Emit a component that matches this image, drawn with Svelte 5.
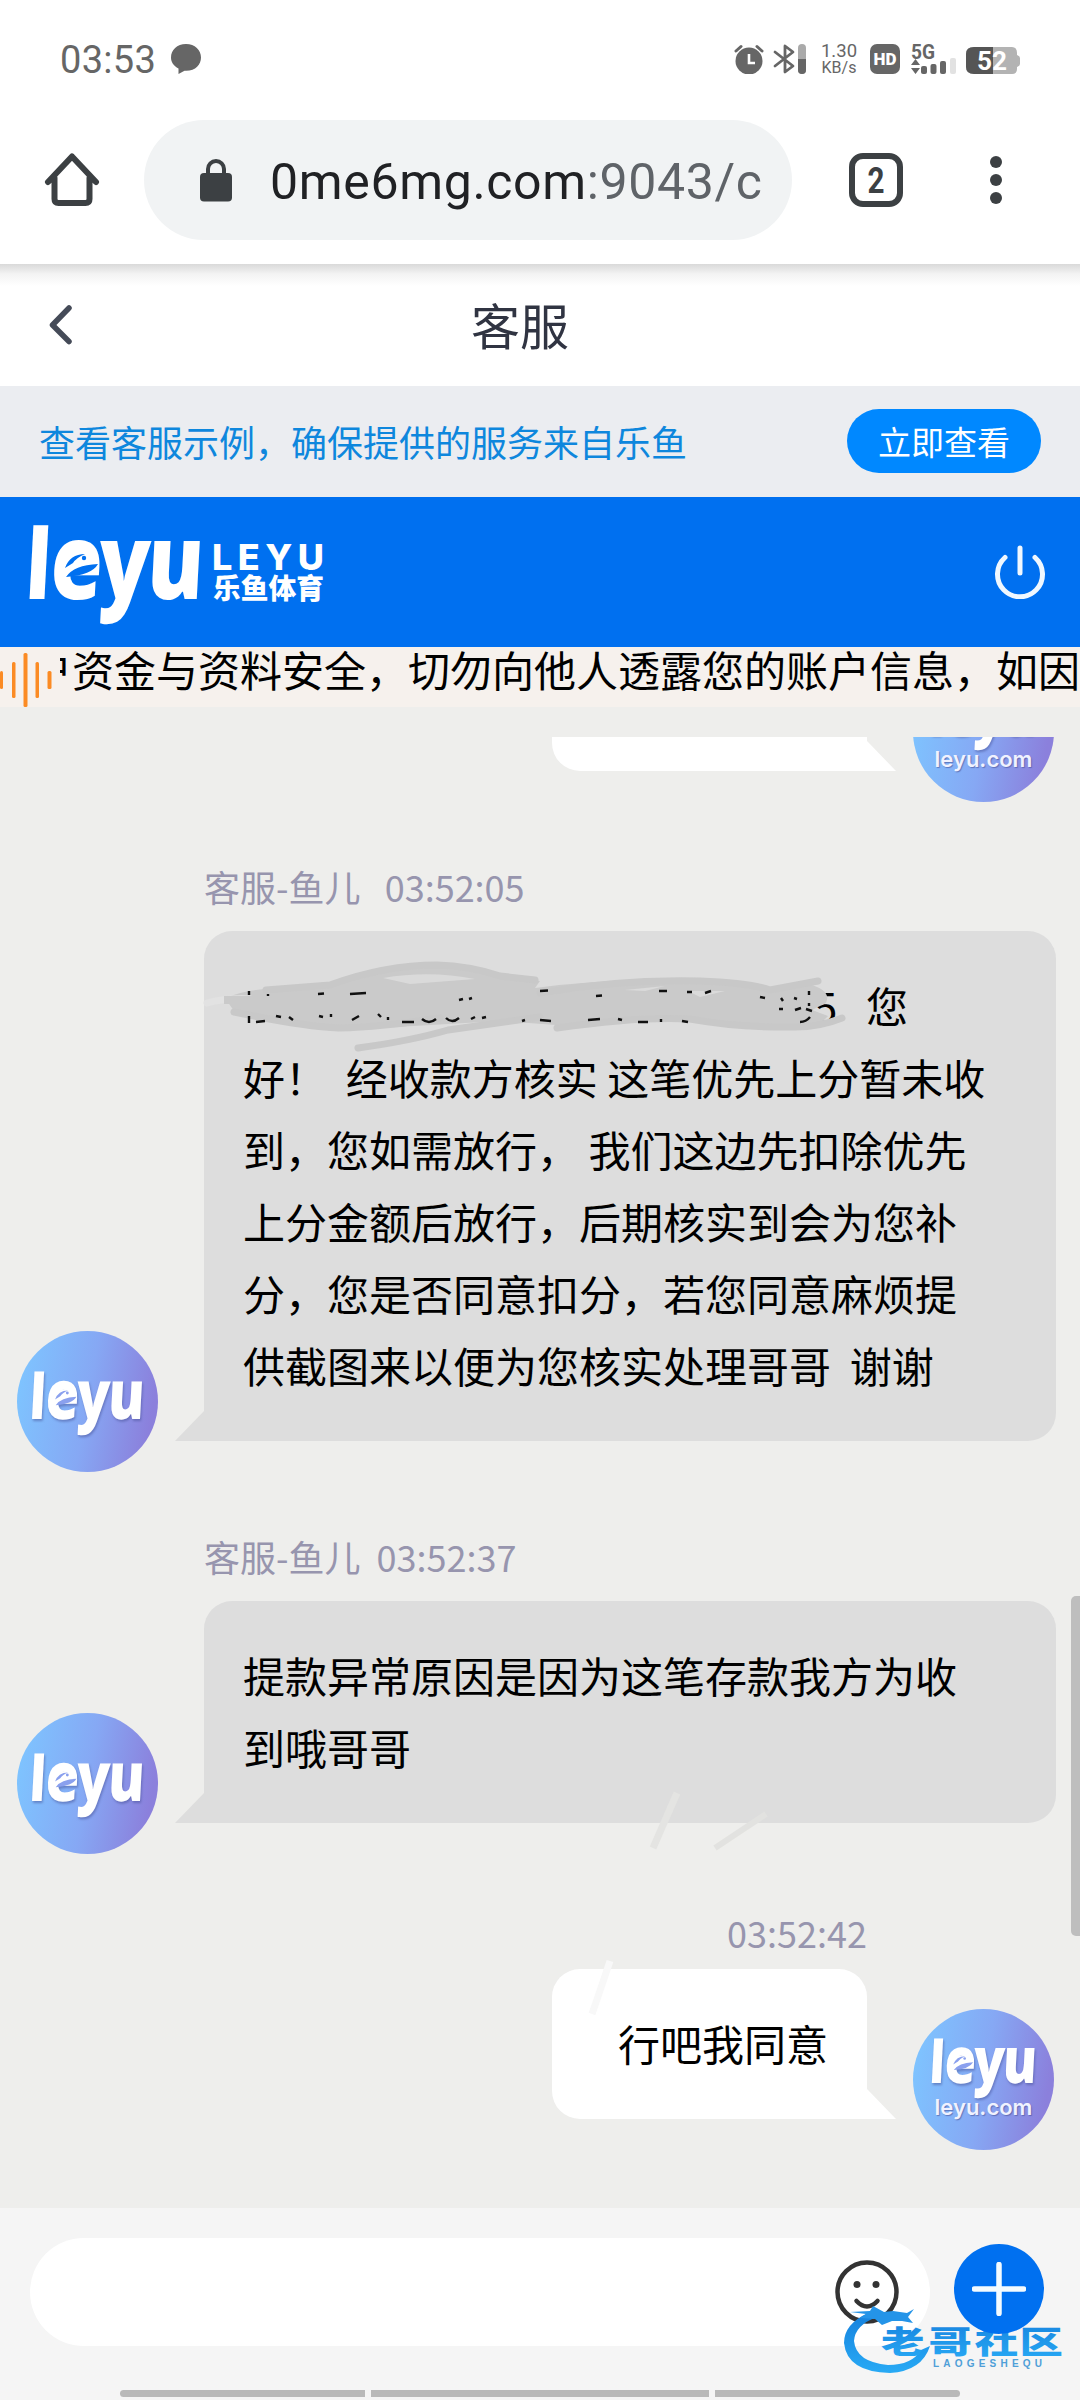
<script lang="ts">
  /**
   * Customer service chat page, shown inside a mobile browser.
   * Status bar, browser toolbar, brand header, notice ticker, messages, composer.
   */

  interface Message {
    id: number;
    side: 'agent' | 'user';
    name?: string;
    time: string;
    lines: string[];
    redacted?: boolean;
  }

  const messages: Message[] = [
    {
      id: 1,
      side: 'agent',
      name: '客服-鱼儿   ',
      time: '03:52:05',
      redacted: true,
      lines: [
        '您',
        '好！  经收款方核实 这笔优先上分暂未收',
        '到，您如需放行， 我们这边先扣除优先',
        '上分金额后放行，后期核实到会为您补',
        '分，您是否同意扣分，若您同意麻烦提',
        '供截图来以便为您核实处理哥哥  谢谢',
      ],
    },
    {
      id: 2,
      side: 'agent',
      name: '客服-鱼儿  ',
      time: '03:52:37',
      lines: ['提款异常原因是因为这笔存款我方为收', '到哦哥哥'],
    },
    { id: 3, side: 'user', time: '03:52:42', lines: ['行吧我同意'] },
  ];

  const waveBars = [
    { x: 0, y: 18, w: 3, h: 18 },
    { x: 12, y: 9, w: 3.5, h: 36 },
    { x: 23.5, y: 0, w: 4, h: 54 },
    { x: 35.5, y: 9, w: 3.5, h: 36 },
    { x: 47.5, y: 18, w: 4, h: 18 },
  ];
</script>

{#snippet wordmark(cut: string)}
  <svg class="wordmark" viewBox="0 0 172 96">
    <g transform="translate(0 75) skewX(-3) scale(0.8 1)">
      <text class="mark" y="0"><tspan x="-7" font-size="97">l</tspan><tspan x="24 84 145" font-size="105">eyu</tspan></text>
    </g>
    <!-- fish eye and fin inside the "e" -->
    <path d="M32 42 Q40 27 54 28 Q64 30 64 39 Q60 44 50 45 L36 50 Z" fill="#fff" />
    <path d="M35 44 Q40 30 55 30 Q46 34 43 39 Z M36 53 Q44 41 68 40 Q62 51 36 53 Z" fill={cut} />
    <circle cx="54" cy="34" r="2.2" fill={cut} />
  </svg>
{/snippet}

{#snippet avatar(withDomain: boolean)}
  <div class="avatar" class:with-domain={withDomain}>
    {@render wordmark('#8aa0ee')}
    {#if withDomain}<span class="domain">leyu.com</span>{/if}
  </div>
{/snippet}

<div class="screen">
  <div class="status">
    <span class="clock">03:53</span>
    <svg class="bubble-icon" width="32" height="30" viewBox="0 0 32 30">
      <path d="M16 0C7 0 1 6 1 13.5c0 4.500 2.500 8.500 7.500 11V30l6-3.300C25 27.500 31 21 31 13.500 31 6 25 0 16 0z" fill="#666" />
    </svg>
    <div class="status-right">
      <svg width="30" height="30" viewBox="0 0 30 30">
        <circle cx="15" cy="17" r="13.500" fill="#666" />
        <path d="M2 7 7 2.500M28 7 23 2.500" stroke="#666" stroke-width="3" stroke-linecap="round" />
        <path d="M15 10v9h6" fill="none" stroke="#fff" stroke-width="2.600" />
      </svg>
      <svg class="bt" width="34" height="30" viewBox="0 0 34 30">
        <path d="M2 8 20 22 12 28V2L20 8 2 22" fill="none" stroke="#666" stroke-width="2.800" stroke-linejoin="round" stroke-linecap="round" />
        <rect x="25" y="0" width="8" height="30" rx="4" fill="#aaa" />
        <path d="M25 15h8v11a4 4 0 0 1-8 0z" fill="#666" />
      </svg>
      <div class="speed"><span>1.30</span><span class="unit">KB/s</span></div>
      <div class="hd">HD</div>
      <svg class="signal" width="46" height="30" viewBox="0 0 46 30">
        <text x="0" y="14.500" class="fiveg" textLength="24" lengthAdjust="spacingAndGlyphs">5G</text>
        <path d="M0 21 4.500 15 9 21zM0 24 4.500 30 9 24z" fill="#666" />
        <rect x="10" y="22" width="6" height="8" rx="2" fill="#666" />
        <rect x="19.500" y="20" width="6" height="10" rx="2" fill="#666" />
        <rect x="29" y="17" width="6" height="13" rx="2" fill="#666" />
        <rect x="39" y="14" width="6" height="16" rx="2" fill="#e2e2e2" />
      </svg>
      <svg class="battery" width="55" height="28" viewBox="0 0 55 28">
        <path d="M8 0h38q5 0 5 6v2q3 1 3 3v6q0 2-3 3v2q0 5-5 5H8q-8 0-8-7V7q0-7 8-7z" fill="#b3b3b3" />
        <path d="M27 0H8Q0 0 0 7v13q0 7 8 7h19z" fill="#555" />
        <text x="11" y="23" textLength="30" lengthAdjust="spacingAndGlyphs" class="level">52</text>
      </svg>
    </div>
  </div>

  <div class="toolbar">
    <svg class="home" width="56" height="56" viewBox="0 0 56 56">
      <path d="M4 30 28 4.500 52 30M10.500 26V47q0 4 4 4h27q4 0 4-4V26" fill="none" stroke="#3c4043" stroke-width="6" stroke-linecap="round" stroke-linejoin="round" />
    </svg>
    <div class="url-bar">
      <svg width="32" height="43" viewBox="0 0 32 43">
        <rect y="14" width="32" height="28.500" rx="4" fill="#3c4043" />
        <path d="M8 18V10a8 8 0 0 1 16 0v8" fill="none" stroke="#3c4043" stroke-width="4" />
      </svg>
      <span class="url">0me6mg.com<span class="rest">:9043/c</span></span>
    </div>
    <svg class="tabs" width="54" height="54" viewBox="0 0 54 54">
      <rect x="3" y="3" width="48" height="48" rx="11" fill="none" stroke="#3c4043" stroke-width="6" />
      <text x="18.500" y="40" textLength="17" lengthAdjust="spacingAndGlyphs">2</text>
    </svg>
    <div class="dots"><i></i><i></i><i></i></div>
  </div>

  <div class="title-bar">
    <svg class="back" width="26" height="44" viewBox="0 0 26 44">
      <path d="M21 5 4.500 22 21 38.500" fill="none" stroke="#454b58" stroke-width="5.500" stroke-linecap="round" stroke-linejoin="round" />
    </svg>
    <h1>客服</h1>
  </div>

  <div class="banner">
    <span>查看客服示例，确保提供的服务来自乐鱼</span>
    <button>立即查看</button>
  </div>

  <header class="brand">
    <div class="logo">{@render wordmark('#0070f0')}</div>
    <svg class="brand-name" width="112" height="62" viewBox="0 0 112 62">
      <text x="-1" y="29" class="latin" textLength="112" lengthAdjust="spacing">LEYU</text>
      <text x="0" y="58" class="hans" textLength="111" lengthAdjust="spacingAndGlyphs">乐鱼体育</text>
    </svg>
    <svg class="power" width="52" height="54" viewBox="0 0 52 54">
      <path d="M26 3v25M11 12.500A22.500 22.500 0 1 0 41 12.500" fill="none" stroke="#f0f8ff" stroke-width="5" stroke-linecap="round" />
    </svg>
  </header>

  <div class="ticker">
    <svg class="wave" width="52" height="54" viewBox="0 0 52 54">
      {#each waveBars as bar (bar.x)}
        <rect x={bar.x} y={bar.y} width={bar.w} height={bar.h} rx="1.500" fill="#fb8b24" />
      {/each}
    </svg>
    <div class="ticker-window">
      <span>户资金与资料安全，切勿向他人透露您的账户信息，如因</span>
    </div>
  </div>

  <main class="messages">
    <div class="row user previous">
      <div class="bubble"></div>
      {@render avatar(true)}
    </div>

    {#each messages as msg (msg.id)}
      <div class="message {msg.side}">
        <div class="meta">{msg.name ?? ''}{msg.time}</div>
        <div class="row {msg.side}">
          {#if msg.side === 'agent'}{@render avatar(false)}{/if}
          <div class="bubble">
            {#each msg.lines as line, i (i)}
              <p class:after-redaction={msg.redacted && i === 0}>{line}</p>
            {/each}
            {#if msg.redacted}
              <svg class="scribble" width="680" height="120" viewBox="200 940 680 120">
                <text x="814" y="1023" font-size="42" fill="#000">5</text>
                <path d="M225 998 Q245 990 266 989 L330 986 Q378 967 436 965 Q470 966 495 975 L540 981 L535 988 Q600 979 671 980 Q725 979 768 988 L808 984 Q832 990 826 1003 L812 1010 L828 1016 Q815 1031 790 1028 L729 1024 L690 1017 L612 1021 L556 1025 L500 1021 L379 1028 Q335 1032 296 1023 L234 1011 Z" fill="#cacaca" />
                <g fill="none" stroke="#c8c8c8" stroke-width="7" stroke-linecap="round" stroke-linejoin="round">
                  <path d="M266 990 L330 985 Q385 965 437 965 Q470 966 500 976 L535 980" />
                  <path d="M234 1012 Q300 1026 339 1028 Q380 1027 440 1018" />
                  <path d="M358 1048 Q410 1041 448 1030 L540 1017" />
                  <path d="M557 1028 Q640 1016 690 1019 Q740 1028 795 1027 Q820 1027 842 1018" />
                  <path d="M540 993 Q620 979 700 981 Q750 983 770 990 L818 981" />
                </g>
                <path d="M207 1003 Q225 998 250 999" stroke="#e2e2e2" stroke-width="7" fill="none" stroke-linecap="round" />
                <path d="M224 1000 L262 1000" stroke="#cacaca" stroke-width="8" />
                <path d="M383 978 Q430 970 475 979 L410 984 Z M625 990 L665 986 L645 991 Z M688 991 L725 991 L700 997 Z" fill="#dadada" />
                <!-- bits of the covered text that still show -->
                <g fill="none" stroke="#111" stroke-width="2.400">
                  <path d="M249 991V995M268 994V996M318 994L324 993.500M350 994L366 993M459 1000L463 999M469 999L472 998" />
                  <path d="M249 1016V1023M256 1022L265 1021M276 1016L281 1017M289 1017L293 1020M319 1016L323 1017M331 1014V1017M352 1020L359 1016M378 1014L381 1017M388 1017V1020M402 1022H414M422 1019Q429 1025 436 1019M446 1018Q452 1024 459 1018M471 1019L475 1017M482 1018L486 1017M522 1021L525 1020M540 1020L551 1021" />
                  <path d="M540 991L548 990.500M596 996L602 995.500M659 991L667 991M687 992L692 992M705 993L711 991M588 1020L600 1019M618 1019L622 1020M638 1022L648 1022M661 1019V1022M682 1021L688 1022M760 997L765 998M781 998L783 1001M794 998L797 999M779 1009L783 1009M795 1010L801 1008M806 1009L812 1011M800 1022Q806 1022 810 1017M809 991V995M809 1003V1006" />
                </g>
              </svg>
            {/if}
          </div>
          {#if msg.side === 'user'}{@render avatar(true)}{/if}
        </div>
      </div>
    {/each}

    <svg class="marks" width="200" height="240" viewBox="580 1780 200 240">
      <path d="M653 1848 L677 1793" stroke="#e4e4e2" stroke-width="7" />
      <path d="M715 1848 L766 1814" stroke="#e2e2e0" stroke-width="6" />
      <path d="M592 2014 Q602 1985 610 1961" stroke="#f8f8f8" stroke-width="7" fill="none" />
    </svg>
    <div class="scrollbar"></div>
  </main>

  <footer>
    <div class="composer">
      <div class="input">
        <svg width="64" height="64" viewBox="0 0 64 64">
          <circle cx="32" cy="32" r="29.500" fill="none" stroke="#333" stroke-width="4.500" />
          <circle cx="22" cy="24.500" r="3.500" fill="#333" />
          <circle cx="41" cy="24.500" r="3.500" fill="#333" />
          <path d="M21.500 41Q32 52 42.500 41" fill="none" stroke="#333" stroke-width="4.500" stroke-linecap="round" />
        </svg>
      </div>
      <div class="plus">
        <svg width="54" height="54" viewBox="0 0 54 54">
          <path d="M27 2.500V51.500M2.500 27H51.500" stroke="#f4fbff" stroke-width="5.500" stroke-linecap="round" />
        </svg>
      </div>
    </div>
    <div class="nav"><i></i><i></i><i></i></div>

    <svg class="watermark" width="240" height="90" viewBox="830 2290 240 90">
      <defs>
        <linearGradient id="wm" x1="0" y1="0" x2="0" y2="1">
          <stop offset="0" stop-color="#1681dd" />
          <stop offset="1" stop-color="#28aaf5" />
        </linearGradient>
      </defs>
      <path d="M868 2313 Q844 2324 844 2343 Q847 2372 890 2373 Q922 2371 930 2346 L921 2350 Q912 2365 888 2365 Q856 2362 854 2341 Q855 2325 877 2317 Z" fill="url(#wm)" />
      <path d="M850 2312 L870 2311 L873 2306 L884 2312 L893 2311 L907 2313 L914 2309 L908 2317 L913 2323 L902 2321 L892 2321 L882 2325 L875 2319 L860 2318 L866 2314 Z" fill="#2494e8" />
      <g transform="translate(881 2353) scale(1.400 1)">
        <text class="wm-main" x="0 34 67 99" y="0" fill="url(#wm)">老哥社区</text>
      </g>
      <text class="wm-sub" x="933" y="2366.500" textLength="109" lengthAdjust="spacing">LAOGESHEQU</text>
    </svg>
  </footer>
</div>

<style>
  :global(body) {
    margin: 0;
    background: #fff;
  }

  .screen {
    width: 1080px;
    height: 2400px;
    display: flex;
    flex-direction: column;
    overflow: hidden;
    font-family: 'Noto Sans CJK SC', sans-serif;
    background: #fff;
  }

  svg {
    display: block;
    flex: none;
  }

  .status {
    display: flex;
    align-items: center;
    height: 118px;
    padding: 0 59px 0 60px;
    box-sizing: border-box;
    font-family: Roboto, sans-serif;
    color: #666;
  }

  .clock {
    padding-top: 1px;
    font-size: 38px;
    letter-spacing: 0.3px;
  }

  .bubble-icon {
    margin-left: 14px;
  }

  .status-right {
    display: flex;
    align-items: center;
    margin-left: auto;
  }

  .bt {
    margin-left: 9px;
  }

  .speed {
    display: flex;
    flex-direction: column;
    align-items: center;
    width: 36px;
    margin-left: 14px;
    font-size: 18.5px;
    line-height: 17px;
  }

  .unit {
    font-size: 16px;
    line-height: 16px;
  }

  .hd {
    width: 30px;
    height: 30px;
    margin-left: 13px;
    border-radius: 7px;
    background: #666;
    color: #fff;
    font-size: 17px;
    font-weight: 900;
    line-height: 31px;
    text-align: center;
  }

  .signal {
    margin-left: 11px;
  }

  .fiveg {
    font-size: 20px;
    font-weight: 700;
    fill: #666;
  }

  .battery {
    margin: 3px 0 0 9px;
  }

  .level {
    font-size: 25px;
    font-weight: 700;
    fill: #fff;
  }

  .toolbar {
    display: flex;
    align-items: center;
    height: 146px;
    padding: 0 78px 22px 44px;
    box-sizing: border-box;
    font-family: Roboto, sans-serif;
  }

  .url-bar {
    display: flex;
    align-items: center;
    width: 648px;
    height: 120px;
    margin-left: 44px;
    padding-left: 56px;
    box-sizing: border-box;
    border-radius: 60px;
    background: #f1f3f4;
  }

  .url {
    margin-left: 38px;
    padding-top: 4px;
    font-size: 50px;
    letter-spacing: 0.65px;
    color: #202124;
  }

  .rest {
    color: #5f6368;
  }

  .tabs {
    margin-left: 57px;
  }

  .tabs text {
    font-size: 36px;
    font-weight: 700;
    fill: #3c4043;
  }

  .dots {
    display: flex;
    flex-direction: column;
    gap: 6px;
    margin-left: auto;
  }

  .dots i {
    width: 12px;
    height: 12px;
    border-radius: 50%;
    background: #3c4043;
  }

  .title-bar {
    display: flex;
    align-items: center;
    height: 122px;
    padding: 0 48px;
    box-sizing: border-box;
    background: linear-gradient(#d9d9d9, #f3f3f3 10px, #fff 22px);
  }

  h1 {
    flex: 1;
    margin: 0 66px 3px 0;
    font-size: 49px;
    font-weight: 400;
    line-height: 60px;
    text-align: center;
    color: #303442;
  }

  .banner {
    display: flex;
    align-items: center;
    justify-content: space-between;
    height: 111px;
    padding: 0 39px 2px;
    box-sizing: border-box;
    background: #ebedf1;
    color: #0e87dd;
    font-size: 36px;
  }

  .banner button {
    width: 194px;
    height: 64px;
    padding: 0;
    border: 0;
    border-radius: 32px;
    background: #0088ff;
    color: #fff;
    font: 33px/62px 'Noto Sans CJK SC', sans-serif;
  }

  .brand {
    display: flex;
    align-items: center;
    height: 150px;
    padding: 0 34px 0 30px;
    box-sizing: border-box;
    background: #0070f0;
  }

  .logo {
    width: 172px;
  }

  .wordmark {
    width: 100%;
    overflow: visible;
  }

  .mark {
    font-family: 'Open Sans', 'Noto Sans', sans-serif;
    font-weight: 800;
    fill: #fff;
  }

  .brand-name {
    margin-left: 11px;
    overflow: visible;
  }

  .latin {
    font-family: Inter, sans-serif;
    font-size: 36px;
    font-weight: 800;
    fill: #fff;
  }

  .hans {
    font-size: 28px;
    font-weight: 900;
    fill: #fff;
  }

  .power {
    margin-left: auto;
  }

  .ticker {
    display: flex;
    height: 60px;
    background: #f6f1ed;
  }

  .wave {
    margin-top: 6px;
  }

  .ticker-window {
    display: flex;
    flex: 1;
    justify-content: flex-end;
    margin-left: 8px;
    overflow: hidden;
    white-space: nowrap;
    font-size: 42px;
    line-height: 43px;
    color: #000;
  }

  .messages {
    position: relative;
    height: 1501px;
    padding-top: 30px;
    box-sizing: border-box;
    background: #eeeeec;
  }

  .row {
    display: flex;
    align-items: flex-end;
  }

  .row.agent {
    padding-left: 17px;
    gap: 46px;
  }

  .row.user {
    justify-content: flex-end;
    padding-right: 26px;
    gap: 46px;
  }

  /* tail end of the message that is scrolled out at the top */
  .previous {
    height: 65px;
    overflow: hidden;
  }

  .previous .bubble {
    width: 315px;
    height: 150px;
  }

  .bubble {
    position: relative;
    box-sizing: border-box;
    padding: 38px 39px 40px;
    border-radius: 28px 28px 28px 0;
    background: #dddddd;
    font-size: 42px;
    line-height: 72px;
    color: #000;
  }

  .bubble p {
    margin: 0;
    white-space: pre;
  }

  .bubble::after {
    content: '';
    position: absolute;
    left: -29px;
    bottom: 0;
    width: 29px;
    height: 30px;
    background: inherit;
    clip-path: polygon(100% 0, 100% 100%, 0 100%);
  }

  .agent .bubble {
    width: 852px;
    margin-bottom: 31px;
  }

  .user .bubble {
    margin-bottom: 31px;
    padding-left: 66px;
    border-radius: 28px 28px 0 28px;
    background: #fff;
  }

  .user .bubble::after {
    left: auto;
    right: -29px;
    clip-path: polygon(0 0, 100% 100%, 0 100%);
  }

  .bubble .after-redaction {
    padding-left: 623px;
  }

  .scribble {
    position: absolute;
    left: -4px;
    top: 9px;
  }

  .meta {
    padding: 0 204px;
    margin-bottom: 20px;
    font-size: 36px;
    line-height: 50px;
    color: #9795ae;
    white-space: pre;
  }

  .message.agent {
    margin-top: 59px;
  }

  .message.user {
    margin-top: 53px;
  }

  .message.user .meta {
    padding-right: 213px;
    margin-bottom: 12px;
    text-align: right;
  }

  .avatar {
    display: flex;
    flex: none;
    flex-direction: column;
    align-items: center;
    width: 141px;
    height: 141px;
    padding-top: 40px;
    box-sizing: border-box;
    border-radius: 50%;
    background: linear-gradient(100deg, #7ec4ff 5%, #86a8f4 50%, #8b80dc 90%);
  }

  .avatar .wordmark {
    width: 112px;
    height: 62px;
    filter: drop-shadow(1px 2px 1px rgba(70, 80, 150, 0.5));
  }

  .with-domain {
    padding-top: 29px;
  }

  .with-domain .wordmark {
    width: 104px;
    height: 58px;
  }

  .domain {
    margin-top: -2px;
    font: 600 22px/26px Inter, sans-serif;
    color: #f0f2ff;
    text-shadow: 1px 1px 1px rgba(70, 80, 150, 0.6);
  }

  .marks {
    position: absolute;
    left: 580px;
    top: 1073px;
  }

  .scrollbar {
    position: absolute;
    right: 0;
    top: 889px;
    width: 9px;
    height: 340px;
    border-radius: 5px 0 0 5px;
    background: #bebebe;
  }

  footer {
    position: relative;
    display: flex;
    flex-direction: column;
    height: 192px;
    background: #f5f5f5;
  }

  .composer {
    display: flex;
    align-items: flex-start;
    padding: 30px 36px 0 30px;
  }

  .input {
    display: flex;
    justify-content: flex-end;
    width: 900px;
    height: 108px;
    padding: 22px 31px 0 0;
    box-sizing: border-box;
    border-radius: 54px;
    background: #fff;
  }

  .plus {
    position: relative;
    z-index: 1;
    display: flex;
    align-items: center;
    justify-content: center;
    width: 90px;
    height: 90px;
    margin: 6px 0 0 24px;
    border-radius: 50%;
    background: #0070f0;
  }

  .nav {
    display: grid;
    grid-template-columns: 245px 338px 245px;
    gap: 6px;
    margin: 44px 0 0 120px;
  }

  .nav i {
    height: 7px;
    background: #b9b9b9;
  }

  .nav i:first-child {
    border-radius: 4px 0 0 4px;
  }

  .nav i:last-child {
    border-radius: 0 4px 4px 0;
  }

  .watermark {
    position: absolute;
    left: 830px;
    top: 82px;
  }

  .wm-main {
    font-size: 31px;
    font-weight: 900;
  }

  .wm-sub {
    font: 700 10px 'Liberation Sans', sans-serif;
    fill: #4f9fd8;
  }
</style>
